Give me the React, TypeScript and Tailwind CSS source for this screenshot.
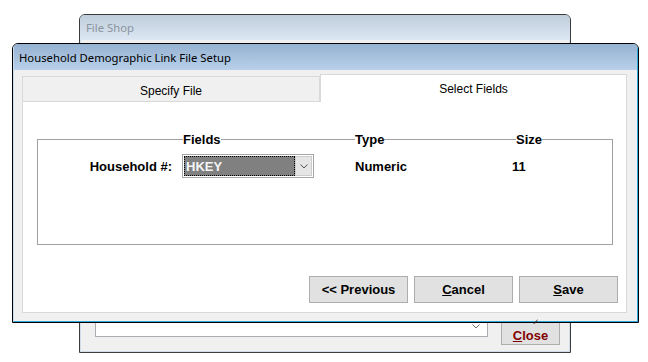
const Chevron = ({ className }: { className?: string }) => (
  <svg width="8" height="5" viewBox="0 0 8 5" className={className}>
    <path d="M0.5 0.5 L4 4 L7.5 0.5" fill="none" stroke="currentColor" strokeWidth="1" />
  </svg>
)

const Btn = ({ children }: { children: React.ReactNode }) => (
  <button className="w-[99px] h-[27px] border border-[#adadad] bg-[#e1e1e1] text-[13px] leading-[15px] font-bold text-black flex items-center justify-center">
    {children}
  </button>
)

const BackWindow = () => (
  <div className="absolute left-[79px] top-[14px] w-[492px] h-[339px] flex flex-col rounded-t-[6px] border border-[#3c3c3c] bg-[#f0f0f0] overflow-hidden">
    <div className="h-[25px] shrink-0 bg-gradient-to-b from-[#bfcddb] to-[#dce7f3] flex items-center pl-[6px] pt-[2px] text-[11.3px] text-[#8c959e] font-['Noto_Sans',sans-serif]">
      File Shop
    </div>
    <div className="flex-1 flex flex-col justify-end border-x border-b border-[#cfdcea]">
      <div className="flex items-end pl-[14px] pb-[6px]">
        <div className="w-[393px] h-[22px] mb-[8px] border border-[#abadb3] bg-white flex items-center justify-end pr-[7px] pt-[1px]">
          <Chevron className="text-[#707070]" />
        </div>
        <button className="ml-[13px] w-[59px] h-[28px] border border-[#adadad] bg-[#e1e1e1] flex items-end justify-center pb-[1px] text-[13px] leading-[15px] font-bold text-[#800000]">
          <span><u>C</u>lose</span>
        </button>
      </div>
    </div>
  </div>
)

const FrontWindow = () => (
  <div className="absolute left-[12px] top-[43px] w-[627px] h-[280px] rounded-t-[6px] border border-black overflow-hidden">
    <div className="h-full flex flex-col border-r border-b border-[#2fa8dc] border-l border-l-[#c9dbee]">
      <div className="h-[26px] shrink-0 bg-gradient-to-b from-[#96b2d2] to-[#b8d0e9] flex items-center pl-[5px] pt-[3px] text-[11.3px] text-black font-['Noto_Sans',sans-serif]">
        Household Demographic Link File Setup
      </div>
      <div className="flex-1 flex flex-col bg-[#f0f0f0] pt-[4px] pl-[8px] pr-[10px] pb-[8px]">
        {/* tabs */}
        <div className="flex items-end h-[27px] relative z-10">
          <div className="w-[298px] h-[25px] border border-b-0 border-[#d9d9d9] bg-[#f0f0f0] flex items-center justify-center pt-[3px] text-[12px] text-black">
            Specify File
          </div>
          <div className="flex-1 h-[28px] -mb-[1px] border border-b-0 border-[#d9d9d9] bg-white flex items-center justify-center text-[12px] text-black">
            Select Fields
          </div>
        </div>
        {/* panel */}
        <div className="flex-1 flex flex-col bg-white border border-[#d9d9d9]">
          <div className="mt-[37px] ml-[14px] w-[576px] h-[106px] border border-[#a0a0a0] text-[13px] leading-[15px] font-bold text-black">
            <div className="grid grid-cols-[144px_173px_157px_1fr] -mt-[8px]">
              <div />
              <span className="w-fit ml-[1px] bg-white">Fields</span>
              <span className="w-fit bg-white">Type</span>
              <span className="w-fit ml-[4px] bg-white">Size</span>
            </div>
            <div className="grid grid-cols-[144px_173px_157px_1fr] items-center mt-[7px]">
              <span className="text-right pr-[10px]">Household #:</span>
              <div className="w-[132px] h-[24px] border border-[#a6a6a6] bg-white p-[1px] flex">
                <div className="flex-1 border border-dotted border-black bg-[#808080] flex items-center pl-[1px] text-[#f4f4f4]">
                  HKEY
                </div>
                <div className="w-[17px] bg-[#e5e5e5] border border-[#cccccc] flex items-center justify-center">
                  <Chevron className="text-[#555555]" />
                </div>
              </div>
              <span>Numeric</span>
              <span>11</span>
            </div>
          </div>
          <div className="mt-auto self-end mr-[8px] mb-[9px] flex gap-[6px]">
            <Btn>&lt;&lt; Previous</Btn>
            <Btn><span><u>C</u>ancel</span></Btn>
            <Btn><span><u>S</u>ave</span></Btn>
          </div>
        </div>
      </div>
    </div>
  </div>
)

export default function App() {
  return (
    <div className="relative w-[648px] h-[362px] bg-white overflow-hidden font-['Liberation_Sans',Arial,sans-serif]">
      <BackWindow />
      <FrontWindow />
      <svg className="absolute left-[532px] top-[319px]" width="7" height="6" viewBox="0 0 7 6">
        <path d="M6 0 L1 5 L4 4 Z" fill="#3a1414" />
      </svg>
    </div>
  )
}
